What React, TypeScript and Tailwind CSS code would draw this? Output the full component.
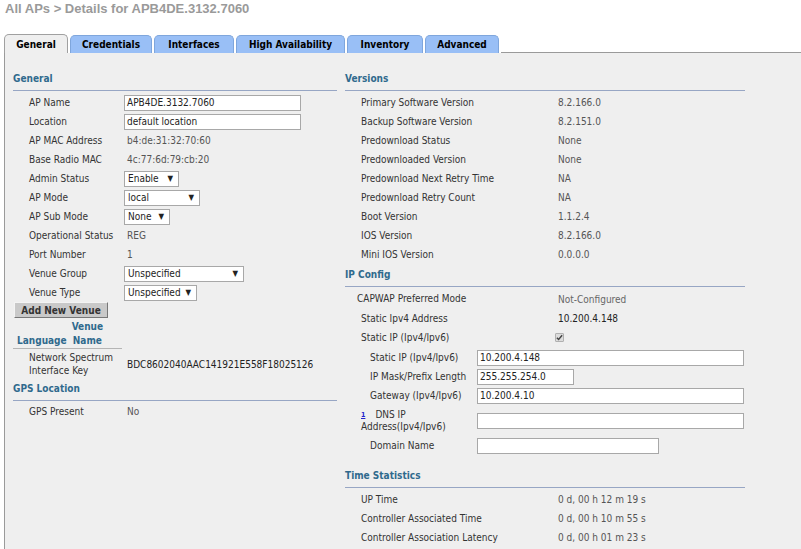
import React from "react";

const tabs = [
  { name: "General", w: "w-[64px]", active: true },
  { name: "Credentials", w: "w-[82px]" },
  { name: "Interfaces", w: "w-[80px]" },
  { name: "High Availability", w: "w-[109px]" },
  { name: "Inventory", w: "w-[76px]" },
  { name: "Advanced", w: "w-[74px]" },
];

const versions = [
  ["Primary Software Version", "8.2.166.0"],
  ["Backup Software Version", "8.2.151.0"],
  ["Predownload Status", "None"],
  ["Predownloaded Version", "None"],
  ["Predownload Next Retry Time", "NA"],
  ["Predownload Retry Count", "NA"],
  ["Boot Version", "1.1.2.4"],
  ["IOS Version", "8.2.166.0"],
  ["Mini IOS Version", "0.0.0.0"],
];

const times = [
  ["UP Time", "0 d, 00 h 12 m 19 s"],
  ["Controller Associated Time", "0 d, 00 h 10 m 55 s"],
  ["Controller Association Latency", "0 d, 00 h 01 m 23 s"],
];

function Header({ title }: { title: string }) {
  return (
    <div className="flex h-[22px] items-end border-b border-[#97a6c4] pb-[4px] font-bold text-[#2f6a8d]">
      {title}
    </div>
  );
}

function Row({ label, children, text }: { label: string; children?: React.ReactNode; text?: boolean }) {
  return (
    <div className="flex h-[19px] items-center pl-[16px]">
      <div className="w-[95px] shrink-0 text-[#333]">{label}</div>
      <div className={text ? "pl-[3px] text-[#555]" : "text-[#555]"}>{children}</div>
    </div>
  );
}

function Input({ value, w }: { value?: string; w: string }) {
  return (
    <div className={`${w} flex h-[16px] items-center border border-[#a8a8a8] bg-white pl-[2px] text-[#222]`}>
      {value}
    </div>
  );
}

function Select({ value, w }: { value: string; w: string }) {
  return (
    <div className={`${w} flex h-[16px] items-center justify-between border border-[#a8a8a8] bg-white pl-[3px] pr-[5px] text-[#222]`}>
      <span>{value}</span>
      <span className="text-[8px]">▼</span>
    </div>
  );
}

function RRow({ label, value, dark }: { label: string; value: string; dark?: boolean }) {
  return (
    <div className="flex h-[19px] items-center pl-[16px]">
      <div className="w-[197px] shrink-0 text-[#333]">{label}</div>
      <div className={dark ? "text-[#222]" : "text-[#555]"}>{value}</div>
    </div>
  );
}

function SubRow({ label, value, w }: { label: string; value?: string; w: string }) {
  return (
    <div className="flex h-[19px] items-center pl-[25px]">
      <div className="w-[107px] shrink-0 text-[#333]">{label}</div>
      <Input value={value} w={w} />
    </div>
  );
}

export default function App() {
  return (
    <div className="h-[549px] w-[801px] overflow-hidden bg-white font-['DejaVu_Sans_Condensed','DejaVu_Sans',sans-serif] text-[10px] [font-stretch:condensed]">
      <div className="flex h-[17px] items-center pl-[5px] font-['Liberation_Sans',Arial,sans-serif] text-[13px] font-bold text-[#9a9a9a] [font-stretch:normal]">
        All APs &gt; Details for APB4DE.3132.7060
      </div>

      <div className="mt-[17px] flex h-[19px] items-end pl-[4px]">
        {tabs.map((t) => (
          <div
            key={t.name}
            className={
              t.active
                ? `${t.w} mr-[2px] flex h-[19px] items-center justify-center rounded-t-[5px] border border-b-0 border-[#a0a0a0] bg-[#efefef] font-bold text-black`
                : `${t.w} mr-[2px] flex h-[18px] items-center justify-center rounded-t-[5px] border border-b-0 border-[#7fa6dc] bg-[#99bff6] font-bold text-black`
            }
          >
            {t.name}
          </div>
        ))}
        <div className="h-px flex-1 bg-[#9a9a9a]" />
      </div>

      <div className="ml-[4px] flex h-[500px] gap-[8px] border-l border-[#9a9a9a] bg-[#efefef] pl-[8px] pt-[16px]">
        {/* left column */}
        <div className="w-[324px] shrink-0">
          <Header title="General" />
          <div className="mt-[2px]">
            <Row label="AP Name"><Input value="APB4DE.3132.7060" w="w-[177px]" /></Row>
            <Row label="Location"><Input value="default location" w="w-[177px]" /></Row>
            <Row label="AP MAC Address" text>b4:de:31:32:70:60</Row>
            <Row label="Base Radio MAC" text>4c:77:6d:79:cb:20</Row>
            <Row label="Admin Status"><Select value="Enable" w="w-[55px]" /></Row>
            <Row label="AP Mode"><Select value="local" w="w-[76px]" /></Row>
            <Row label="AP Sub Mode"><Select value="None" w="w-[46px]" /></Row>
            <Row label="Operational Status" text>REG</Row>
            <Row label="Port Number" text>1</Row>
            <Row label="Venue Group"><Select value="Unspecified" w="w-[120px]" /></Row>
            <Row label="Venue Type"><Select value="Unspecified" w="w-[73px]" /></Row>
          </div>
          <div className="ml-[1px] flex h-[16px] w-[94px] items-center justify-center border border-t-[#f4f4f4] border-l-[#f4f4f4] border-r-[#777] border-b-[#777] bg-[#c9c9c9] font-bold text-[#333]">
            Add New Venue
          </div>
          <div className="flex h-[31px] w-[109px] items-end gap-[5px] border-b border-[#b5b5b5] pl-[4px] font-bold leading-[14px] text-[#2f6a8d]">
            <span>Language</span>
            <span className="text-center">Venue<br />Name</span>
          </div>
          <div className="flex h-[30px] items-center pl-[16px]">
            <div className="w-[98px] shrink-0 leading-[13px] text-[#333]">Network Spectrum<br />Interface Key</div>
            <div className="text-[#222]">BDC8602040AAC141921E558F18025126</div>
          </div>
          <Header title="GPS Location" />
          <div className="mt-[1px]">
            <div className="flex h-[19px] items-center pl-[16px]">
              <div className="w-[98px] shrink-0 text-[#333]">GPS Present</div>
              <div className="text-[#555]">No</div>
            </div>
          </div>
        </div>

        {/* right column */}
        <div className="w-[400px] shrink-0">
          <Header title="Versions" />
          <div className="mt-[2px]">
            {versions.map(([l, v]) => (
              <RRow key={l} label={l} value={v} />
            ))}
          </div>
          <div className="mt-[1px]">
            <Header title="IP Config" />
          </div>
          <div className="mt-[1px] flex h-[21px] items-center pl-[12px]">
            <div className="w-[201px] shrink-0 text-[#333]">CAPWAP Preferred Mode</div>
            <div className="pt-[2px] text-[#666]">Not-Configured</div>
          </div>
          <RRow label="Static Ipv4 Address" value="10.200.4.148" dark />
          <div className="flex h-[19px] items-center pl-[16px]">
            <div className="w-[194px] shrink-0 text-[#333]">Static IP (Ipv4/Ipv6)</div>
            <span className="flex h-[9px] w-[9px] items-center justify-center rounded-[1px] border border-[#b0b0b0] bg-[#dcdcdc]">
              <svg viewBox="0 0 8 8" className="h-[7px] w-[7px]">
                <path d="M1 4.2 L3 6.3 L7 1.5" fill="none" stroke="#444" strokeWidth="1.6" />
              </svg>
            </span>
          </div>
          <div className="mt-[1px]">
            <SubRow label="Static IP (Ipv4/Ipv6)" value="10.200.4.148" w="w-[267px]" />
            <SubRow label="IP Mask/Prefix Length" value="255.255.254.0" w="w-[97px]" />
            <SubRow label="Gateway (Ipv4/Ipv6)" value="10.200.4.10" w="w-[267px]" />
          </div>
          <div className="flex h-[32px] items-center pl-[16px]">
            <div className="w-[116px] shrink-0 leading-[12px] text-[#333]">
              <span className="mr-[10px] align-top text-[7px] font-bold text-[#2222cc] underline">1</span>
              DNS IP
              <br />
              Address(Ipv4/Ipv6)
            </div>
            <Input w="w-[267px]" />
          </div>
          <div className="-mt-[1px]">
            <SubRow label="Domain Name" w="w-[182px]" />
          </div>
          <div className="mt-[11px]">
            <Header title="Time Statistics" />
          </div>
          <div className="mt-[2px]">
            {times.map(([l, v]) => (
              <RRow key={l} label={l} value={v} />
            ))}
          </div>
        </div>
      </div>
    </div>
  );
}
